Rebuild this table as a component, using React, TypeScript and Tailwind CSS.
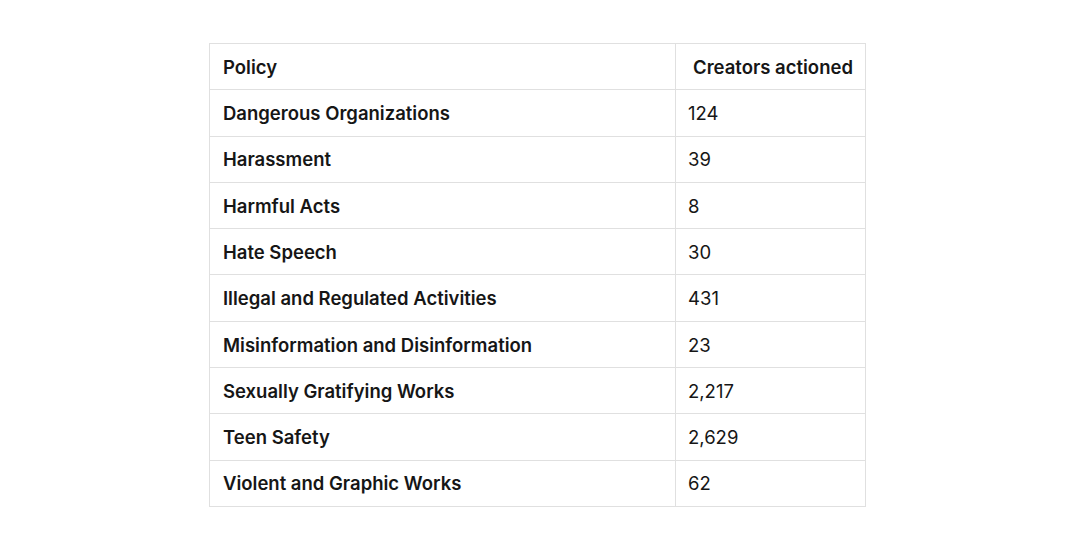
const ROWS = [
  { policy: "Dangerous Organizations", count: "124" },
  { policy: "Harassment", count: "39" },
  { policy: "Harmful Acts", count: "8" },
  { policy: "Hate Speech", count: "30" },
  { policy: "Illegal and Regulated Activities", count: "431" },
  { policy: "Misinformation and Disinformation", count: "23" },
  { policy: "Sexually Gratifying Works", count: "2,217" },
  { policy: "Teen Safety", count: "2,629" },
  { policy: "Violent and Graphic Works", count: "62" },
];

export default function App() {
  return (
    <div className="min-h-[558px] bg-white pt-[43px] font-['Inter',sans-serif] text-[#161616]">
      <table className="ml-[209px] w-[657px] border-collapse text-[18.5px]">
        <thead>
          <tr className="h-[46.3px]">
            <th className="w-[466px] border border-[#e0e0e0] px-[13px] pt-[2px] text-left font-semibold">
              Policy
            </th>
            <th className="border border-[#e0e0e0] pt-[2px] pr-[8px] pl-[17px] text-left font-semibold">
              Creators actioned
            </th>
          </tr>
        </thead>
        <tbody>
          {ROWS.map((r) => (
            <tr key={r.policy} className="h-[46.3px]">
              <td className="border border-[#e0e0e0] px-[13px] pt-[2px] font-semibold">{r.policy}</td>
              <td className="border border-[#e0e0e0] px-[12px] pt-[2px] font-normal">{r.count}</td>
            </tr>
          ))}
        </tbody>
      </table>
    </div>
  );
}
